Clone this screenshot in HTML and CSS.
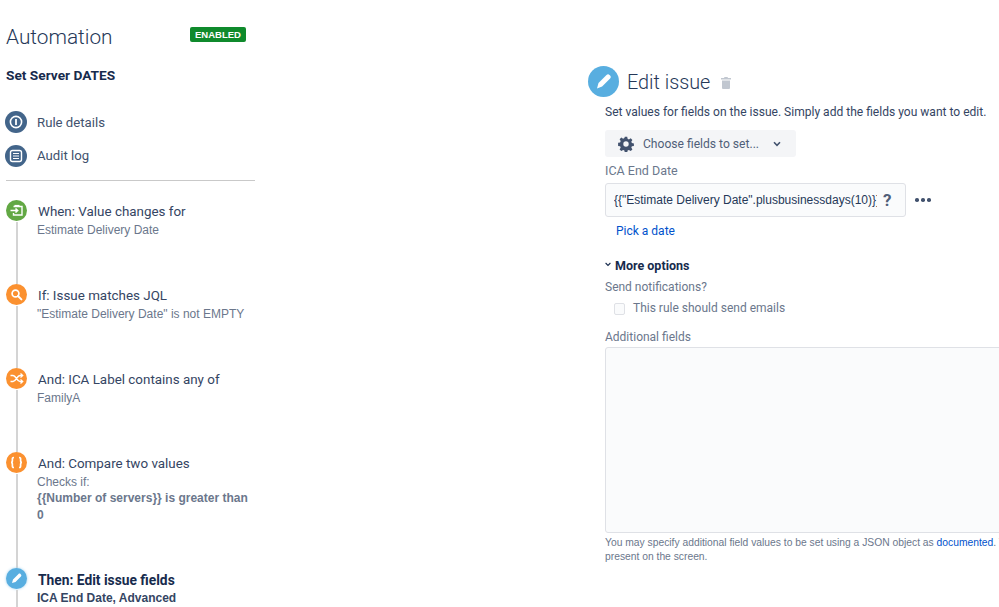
FILE: index.html
```html
<!DOCTYPE html>
<html lang="en">
<head>
<meta charset="utf-8">
<title>Automation</title>
<link rel="stylesheet" href="styles.css">
</head>
<body>
<div class="page">
  <aside class="side">
    <div class="head"><h1>Automation</h1><span class="lozenge">ENABLED</span></div>
    <h2>Set Server DATES</h2>
    <nav class="nav">
      <div class="nav-row"><span class="nav-icon"><svg viewBox="0 0 22 22" width="22" height="22"><circle cx="11" cy="11" r="5.6" fill="none" stroke="#fff" stroke-width="1.6"/><path d="M11 8v6" stroke="#fff" stroke-width="1.8"/></svg></span>Rule details</div>
      <div class="nav-row"><span class="nav-icon"><svg viewBox="0 0 22 22" width="22" height="22"><rect x="5.5" y="5.5" width="11" height="11" rx="2" fill="none" stroke="#fff" stroke-width="1.4"/><path d="M8 8.5h6M8 11h6M8 13.5h6" stroke="#fff" stroke-width="1.2"/></svg></span>Audit log</div>
    </nav>
    <hr class="rule">
    <div class="steps">
      <div class="step">
        <div class="rail"><span class="dot green"><svg viewBox="0 0 21 21" width="21" height="21"><path d="M7.500 6.500h8.500v8.500H7.500v-2" fill="none" stroke="#fff" stroke-width="1.4"/><path d="M8.500 5.500h5" stroke="#fff" stroke-width="1.2"/><path d="M4.500 10.500h7M9.500 8.500l2.200 2-2.200 2" fill="none" stroke="#fff" stroke-width="1.5"/></svg></span><span class="line"></span></div>
        <div class="body"><div class="t">When: Value changes for</div><div class="d">Estimate Delivery Date</div></div>
      </div>
      <div class="step">
        <div class="rail"><span class="dot orange"><svg viewBox="0 0 21 21" width="21" height="21"><circle cx="9.500" cy="9.500" r="3.400" fill="none" stroke="#fff" stroke-width="1.700"/><path d="M12 12l3.400 3.400" stroke="#fff" stroke-width="2" stroke-linecap="round"/></svg></span><span class="line"></span></div>
        <div class="body"><div class="t">If: Issue matches JQL</div><div class="d">"Estimate Delivery Date" is not EMPTY</div></div>
      </div>
      <div class="step">
        <div class="rail"><span class="dot orange"><svg viewBox="0 0 21 21" width="21" height="21"><path d="M4.500 7.500h2.500c3 0 4 6 7 6h2M4.500 13.500H7c3 0 4-6 7-6h2" fill="none" stroke="#fff" stroke-width="1.400"/><path d="M14.500 5.500l2.200 2-2.200 2M14.500 11.500l2.200 2-2.200 2" fill="none" stroke="#fff" stroke-width="1.300"/></svg></span><span class="line"></span></div>
        <div class="body"><div class="t">And: ICA Label contains any of</div><div class="d">FamilyA</div></div>
      </div>
      <div class="step tall">
        <div class="rail"><span class="dot orange"><svg viewBox="0 0 21 21" width="21" height="21"><path d="M8 5.500c-2 0-1.600 1.500-1.600 3 0 1.300-.4 2-1.400 2 1 0 1.400.7 1.400 2 0 1.500-.4 3 1.600 3M13 5.500c2 0 1.600 1.500 1.600 3 0 1.300.4 2 1.400 2-1 0-1.400.7-1.400 2 0 1.500.4 3-1.600 3" fill="none" stroke="#fff" stroke-width="1.700"/></svg></span><span class="line"></span></div>
        <div class="body"><div class="t">And: Compare two values</div><div class="d">Checks if:</div><div class="d strong">{{Number of servers}} is greater than 0</div></div>
      </div>
      <div class="step current">
        <div class="rail"><span class="dot blue"><svg viewBox="0 0 21 21" width="21" height="21"><path d="M6 15l1-3.500 5.500-5.500c.6-.6 1.500-.6 2 0l.4.400c.6.600.6 1.500 0 2L9.500 14z" fill="#fff"/></svg></span><span class="line"></span></div>
        <div class="body"><div class="t">Then: Edit issue fields</div><div class="d">ICA End Date, Advanced</div></div>
      </div>
    </div>
  </aside>
  <main class="main">
    <div class="edit-head">
      <span class="edit-dot"><svg viewBox="0 0 31 31" width="31" height="31"><path d="M9 22.500l1.500-5.500 8-8c.9-.9 2.200-.9 3 0l.6.600c.9.900.9 2.200 0 3l-8 8z" fill="#fff"/></svg></span>
      <span class="edit-title">Edit issue</span>
      <svg class="trash" viewBox="0 0 10 12" width="10" height="12"><path d="M3.500 0h3l.5 1h3v1.500H0V1h3zM1 3.500h8V11a1 1 0 0 1-1 1H2a1 1 0 0 1-1-1z" fill="#c1c7d0"/></svg>
    </div>
    <div class="form">
      <p class="intro">Set values for fields on the issue. Simply add the fields you want to edit.</p>
      <div class="choose"><svg viewBox="0 0 16 16" width="16" height="16"><path d="M6.800.8h2.400l.4 2 1.300.6 1.800-1.100 1.700 1.700-1.100 1.800.6 1.300 2 .4v2.400l-2 .4-.6 1.300 1.100 1.800-1.700 1.700-1.800-1.100-1.300.6-.4 2H6.800l-.4-2-1.300-.6-1.800 1.100-1.700-1.700 1.100-1.800-.6-1.300-2-.4V6.800l2-.4.600-1.300-1.100-1.800 1.700-1.700 1.800 1.100 1.300-.6zM8 5.300a2.700 2.700 0 1 0 0 5.400 2.700 2.700 0 0 0 0-5.400z" fill="#42526e" fill-rule="evenodd"/></svg><span>Choose fields to set...</span><svg class="chev" viewBox="0 0 8 6" width="8" height="6"><path d="M1 1.300l3 3 3-3" fill="none" stroke="#42526e" stroke-width="1.600"/></svg></div>
      <label class="label first">ICA End Date</label>
      <div class="date-row">
        <div class="input"><span class="val">{{"Estimate Delivery Date".plusbusinessdays(10)}}</span><span class="q">?</span></div>
        <span class="more"><i></i><i></i><i></i></span>
      </div>
      <a class="pick">Pick a date</a>
      <div class="opts"><svg viewBox="0 0 6 5" width="6" height="5"><path d="M.6 1l2.400 2.400L5.400 1" fill="none" stroke="#172b4d" stroke-width="1.100"/></svg>More options</div>
      <div class="label notif">Send notifications?</div>
      <div class="check"><span class="box"></span>This rule should send emails</div>
      <div class="label addl">Additional fields</div>
      <div class="area"></div>
      <p class="help">You may specify additional field values to be set using a JSON object as <a>documented</a>. The fields must be present on the screen.</p>
    </div>
  </main>
</div>
</body>
</html>
```
FILE: styles.css
```css
* { box-sizing: border-box; }
html, body { margin: 0; padding: 0; height: 100%; overflow: hidden; background: #fff; }
body { font-family: Roboto, "Liberation Sans", sans-serif; color: #172b4d; font-size: 12px; }
.page { display: flex; height: 607px; overflow: hidden; }
.side { width: 250px; margin-left: 5px; flex: none; }
.main { flex: none; width: 394px; margin-left: 350px; padding-top: 66px; }

.head { display: flex; justify-content: space-between; align-items: flex-start; height: 53px; padding-top: 23px; padding-right: 9px; }
h1 { margin: 0 0 0 1px; font-size: 20.800px; font-weight: 300; line-height: 29px; color: #253858; }
.lozenge { margin-top: 4px; width: 56px; height: 15px; background: #0f8a2c; color: #fff; font-size: 9.500px; font-weight: 700; line-height: 15px; text-align: center; border-radius: 2px; font-family: "Liberation Sans", sans-serif; }
h2 { margin: 14px 0 0 1px; font-size: 13.700px; font-weight: 700; line-height: 16px; color: #172b4d; }

.nav { margin-top: 28px; }
.nav-row { display: flex; align-items: center; height: 22px; margin-bottom: 11.500px; font-size: 13.200px; color: #42526e; }
.nav-icon { width: 22px; height: 22px; border-radius: 50%; background: #43658a; margin-right: 10px; display: flex; }
.rule { border: 0; border-top: 1px solid #c9c9c9; margin: 13px 0 19px 1px; }

.step { display: flex; height: 84px; }
.step.tall { height: 116px; }
.step.current { height: 60px; }
.rail { width: 21px; margin-left: 1px; display: flex; flex-direction: column; align-items: center; flex: none; }
.dot { width: 21px; height: 21px; border-radius: 50%; flex: none; display: flex; }
.dot.green { background: #62a844; }
.dot.orange { background: #fb9130; }
.dot.blue { background: #58aee0; box-shadow: 0 0 3px #9fd0ee; }
.line { width: 2px; flex: 1; background: #d4d4d4; margin-top: 1px; }
.body { margin-left: 11px; width: 215px; padding-top: 4px; }
.t { font-size: 13.400px; line-height: 16px; color: #344563; }
.d { font-family: "Liberation Sans", sans-serif; font-size: 12px; line-height: 16px; margin-top: 2px; margin-left: -1px; color: #6b778c; }
.d.strong { font-weight: 700; margin-top: 0; line-height: 17px; }
.current .t { font-weight: 700; font-size: 13.800px; color: #172b4d; }
.current .d { font-weight: 700; color: #344563; }

.edit-head { display: flex; align-items: center; height: 31px; margin-left: -17px; }
.edit-dot { width: 31px; height: 31px; border-radius: 50%; background: #58aee0; display: flex; flex: none; }
.edit-title { margin-left: 8px; margin-top: 2px; font-size: 19.800px; font-weight: 300; color: #253858; }
.trash { margin-left: 11px; margin-top: 2px; }
.form { width: 600px; }
.intro { margin: 7px 0 0; font-size: 12.060px; line-height: 16px; color: #344563; white-space: nowrap; }
.choose { display: flex; align-items: center; width: 191px; height: 27px; margin-top: 10px; background: #f4f5f7; border-radius: 3px; padding-left: 13px; font-size: 12.100px; color: #505f79; }
.choose span { margin-left: 9px; }
.chev { margin-left: 14px; }
.label { font-size: 12px; line-height: 16px; color: #6b778c; }
.label.first { display: block; font-size: 12.500px; margin-top: 6px; }
.date-row { display: flex; align-items: center; margin-top: 4px; }
.input { display: flex; align-items: center; width: 301px; height: 34px; background: #fafbfc; border: 1px solid #dfe1e6; border-radius: 3px; padding-left: 8px; }
.val { width: 263px; overflow: hidden; white-space: nowrap; font-family: "Liberation Sans", sans-serif; font-size: 12px; color: #253858; }
.q { font-size: 17px; font-weight: 700; color: #505f79; margin-left: 6px; }
.more { display: flex; gap: 2.500px; margin-left: 9px; }
.more i { width: 3.500px; height: 3.500px; border-radius: 50%; background: #42526e; }
.pick { display: block; margin: 6px 0 0 11px; font-size: 12px; line-height: 16px; color: #0052cc; }
.opts { display: flex; align-items: center; gap: 4px; margin-top: 19px; font-size: 12.500px; font-weight: 700; line-height: 16px; color: #172b4d; }
.opts svg { margin-top: -4px; }
.notif { margin-top: 5px; }
.check { display: flex; align-items: center; margin-top: 5px; font-size: 12px; line-height: 16px; color: #6b778c; }
.box { width: 11px; height: 12px; margin: 2px 8px 0 9px; border: 1px solid #dfe1e6; background: #fafbfc; border-radius: 2px; }
.addl { margin-top: 13px; }
.area { width: 420px; height: 186px; margin-top: 2px; background: #fafbfc; border: 1px solid #dfe1e6; border-radius: 3px; }
.help { margin: 3px 0 0; width: 490px; font-family: "Liberation Sans", sans-serif; font-size: 10.300px; line-height: 14px; color: #6b778c; }
.help a { color: #0052cc; }
```
